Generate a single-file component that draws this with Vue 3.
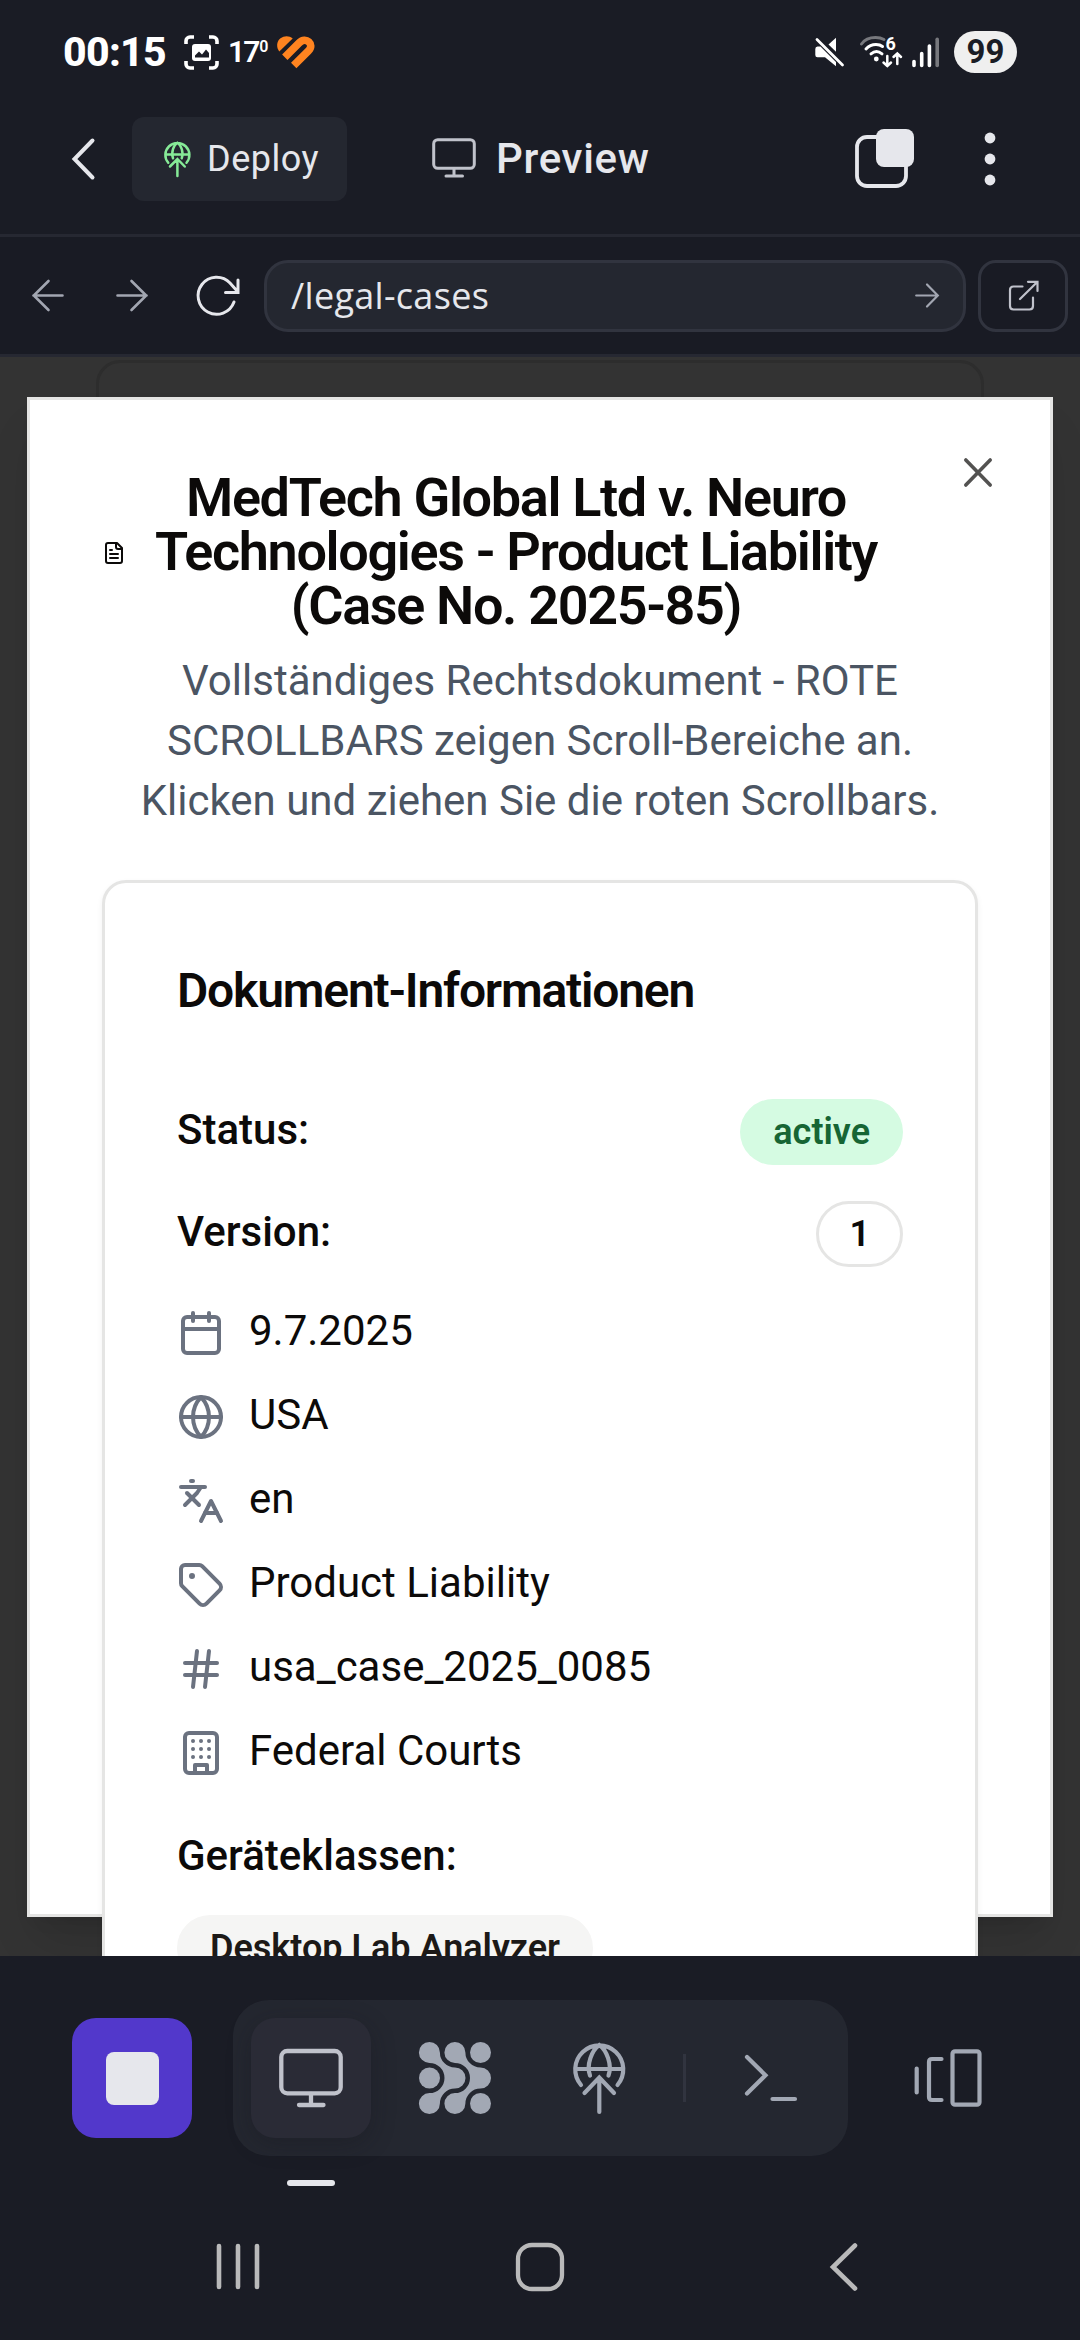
<script setup>
const metaRows = [
  { icon: 'calendar', text: '9.7.2025' },
  { icon: 'globe', text: 'USA' },
  { icon: 'languages', text: 'en' },
  { icon: 'tag', text: 'Product Liability' },
  { icon: 'hash', text: 'usa_case_2025_0085' },
  { icon: 'building', text: 'Federal Courts' },
]

const icons = {
  calendar: ['M8 2v4', 'M16 2v4', 'M5 4h14a2 2 0 0 1 2 2v14a2 2 0 0 1-2 2H5a2 2 0 0 1-2-2V6a2 2 0 0 1 2-2Z', 'M3 10h18'],
  globe: ['M12 2a10 10 0 1 0 0 20 10 10 0 1 0 0-20', 'M12 2a14.5 14.5 0 0 0 0 20 14.5 14.5 0 0 0 0-20', 'M2 12h20'],
  languages: ['m5 8 6 6', 'm4 14 6-6 2-3', 'M2 5h12', 'M7 2h1', 'm22 22-5-10-5 10', 'M14 18h6'],
  tag: [
    'M12.586 2.586A2 2 0 0 0 11.172 2H4a2 2 0 0 0-2 2v7.172a2 2 0 0 0 .586 1.414l8.704 8.704a2.426 2.426 0 0 0 3.42 0l6.58-6.58a2.426 2.426 0 0 0 0-3.42z',
    'M7.5 7a.5.5 0 1 0 0 1 .5.5 0 1 0 0-1',
  ],
  hash: ['M4 9h16', 'M4 15h16', 'M10 3 8 21', 'M16 3l-2 18'],
  building: [
    'M6 2h12a2 2 0 0 1 2 2v16a2 2 0 0 1-2 2H6a2 2 0 0 1-2-2V4a2 2 0 0 1 2-2Z',
    'M9 22v-4h6v4',
    'M8 6h.01M12 6h.01M16 6h.01M8 10h.01M12 10h.01M16 10h.01M8 14h.01M12 14h.01M16 14h.01',
  ],
}
</script>

<template>
  <div class="screen">
    <div class="status-bar">
      <span class="clock">00:15</span>
      <svg class="scan" width="35" height="35" viewBox="0 0 35 35" fill="none" stroke="#fff" stroke-width="3.6">
        <path d="M2 9V6a4 4 0 0 1 4-4h4M25 2h4a4 4 0 0 1 4 4v3M33 26v3a4 4 0 0 1-4 4h-4M10 33H6a4 4 0 0 1-4-4v-3" />
        <rect x="8" y="9" width="19" height="17" rx="3" fill="#fff" stroke="none" />
        <path d="M11 22.5v-2l4-4 3 3 4-5 3 3.500v4.500z" fill="#1a1c25" stroke="none" />
      </svg>
      <span class="temp">17<sup>0</sup></span>
      <svg class="heart" width="38" height="33" viewBox="0 0 38 33" fill="none">
        <path d="M2.300 15.500C-1 11.500-.5 5.500 3.500 2.300 7.500-.7 12.500-.3 15.700 2.600Z" fill="#ff8420" />
        <path d="M7.800 21.200 22 7C29-.2 38 8.500 31.500 14.700L16.700 29.500" stroke="#ff8420" stroke-width="7.600" />
      </svg>
      <div class="status-right">
        <svg class="mute" width="30" height="30" viewBox="0 0 30 30" fill="#fff">
          <path d="M13.500 7.500 21 .8V14.800Z" />
          <path d="M2.500 9.500H5.500L21 25V29.300L10 20.300H2.500Q.3 20.300.3 18V12Q.3 9.500 2.500 9.500Z" />
          <path d="M2 2.500 27.500 28" stroke="#fff" stroke-width="2.800" stroke-linecap="round" />
        </svg>
        <svg class="wifi" width="43" height="34" viewBox="0 0 43 34" fill="none" stroke-width="3" stroke-linecap="round">
          <path d="M1.500 9Q6 2.500 15.500 2.500 20.500 2.500 24 4.500" stroke="#77787d" />
          <path d="M6 14Q10 9.500 16 9.500 20 9.500 22.500 11.500M11 18.800Q16.500 14.300 22 18.800" stroke="#fff" />
          <circle cx="16.300" cy="24" r="2.400" fill="#fff" />
          <path d="M27.300 21V31M23.500 27.500 27.300 31 31 27.500M37.300 29V18.500M33.500 22 37.300 18.500 41 22" stroke="#fff" stroke-width="2.500" />
          <text x="25.500" y="14.500" class="wifi-gen">6</text>
        </svg>
        <svg class="signal" width="28" height="31" viewBox="0 0 28 31" fill="none" stroke-width="3.600" stroke-linecap="round">
          <path d="M2 24.500V28.500M9.700 16.500V28.500M17.400 9V28.500" stroke="#fff" />
          <path d="M25.200 2.200V28.500" stroke="#77787d" />
        </svg>
        <span class="battery">99</span>
      </div>
    </div>

    <header class="header">
      <svg class="back" width="24" height="42" viewBox="0 0 24 42" fill="none" stroke="#e6e7ec" stroke-width="4" stroke-linecap="round"><path d="M20.500 2.500 2.500 21 20.500 39.500" /></svg>
      <button class="deploy">
        <svg width="27" height="36" viewBox="0 0 53 72" fill="none" stroke="#86ea97" stroke-width="5" stroke-linecap="round">
          <path d="M8 43.500A24 24 0 1 1 44.500 43.500M3 27H49.500M17.500 34.500C13 23 19 8 26.300 3.500 33.500 8 39.500 23 35 34.500M26.300 70V36M11.500 51 26.300 36 41 51" />
        </svg>
        <span>Deploy</span>
      </button>
      <svg class="monitor" width="44" height="41" viewBox="0 0 44 41" fill="none" stroke="#c0c2cb" stroke-width="3" stroke-linecap="round">
        <rect x="1.700" y="1.700" width="40.600" height="28.600" rx="4" /><path d="M22 30.500V37M14 38H30.500" />
      </svg>
      <span class="preview">Preview</span>
      <svg class="copy" width="59" height="60" viewBox="0 0 59 60" fill="none">
        <rect x="2" y="8" width="49" height="49" rx="10" stroke="#e6e7ec" stroke-width="3.800" />
        <rect x="21" y="0" width="38" height="38" rx="8" fill="#e6e7ec" />
      </svg>
      <svg class="dots" width="12" height="54" viewBox="0 0 12 54" fill="#e6e7ec"><circle cx="6" cy="6" r="5.400" /><circle cx="6" cy="27" r="5.400" /><circle cx="6" cy="48" r="5.400" /></svg>
    </header>

    <nav class="address-bar">
      <svg class="nav-back" width="32" height="33" viewBox="0 0 32 33" fill="none" stroke="#a2a6b1" stroke-width="2.600" stroke-linecap="round"><path d="M30.500 16.500H1.500M16.500 2 1.800 16.500 16.500 31" /></svg>
      <svg class="nav-forward" width="32" height="33" viewBox="0 0 32 33" fill="none" stroke="#a2a6b1" stroke-width="2.600" stroke-linecap="round"><path d="M1.500 16.500H30.500M15.500 2 30.200 16.500 15.500 31" /></svg>
      <svg class="reload" width="44" height="40" viewBox="0 0 44 40" fill="none" stroke="#e6e7ec" stroke-width="3" stroke-linecap="round">
        <path d="M38 26A18.500 18.500 0 1 1 34 7L42 16M42 4V16.500H29.500" />
      </svg>
      <div class="url">
        <span>/legal-cases</span>
        <svg width="24" height="25" viewBox="0 0 24 25" fill="none" stroke="#a2a6b1" stroke-width="2.200" stroke-linecap="round"><path d="M1.200 12.500H22.500M12 1.500 22.800 12.500 12 23.500" /></svg>
      </div>
      <div class="external">
        <svg width="31" height="31" viewBox="0 0 31 31" fill="none" stroke="#c0c2cb" stroke-width="2.200" stroke-linecap="round"><path d="M14.500 6.500H5.500Q2 6.500 2 10V26Q2 29.500 5.500 29.500H21.500Q25 29.500 25 26V17.500M20 1.800H29.500V11M29 2.200 12 19" /></svg>
      </div>
    </nav>

    <main class="viewport">
      <div class="page-card"></div>
      <section class="modal">
        <svg class="close" width="28" height="29" viewBox="0 0 28 29" fill="none" stroke="#535251" stroke-width="3.600" stroke-linecap="round"><path d="M1.800 2 26.200 27M26.200 2 1.800 27" /></svg>
        <div class="modal-title">
          <svg width="24" height="24" viewBox="0 0 24 24" fill="none" stroke="#0c0a09" stroke-width="2" stroke-linecap="round" stroke-linejoin="round">
            <path d="M15 2H6a2 2 0 0 0-2 2v16a2 2 0 0 0 2 2h12a2 2 0 0 0 2-2V7Z" /><path d="M14 2v4a2 2 0 0 0 2 2h4M10 9H8M16 13H8M16 17H8" />
          </svg>
          <h2>MedTech Global Ltd v. Neuro<br />Technologies - Product Liability<br />(Case No. 2025-85)</h2>
        </div>
        <p class="description">Vollständiges Rechtsdokument - ROTE<br />SCROLLBARS zeigen Scroll-Bereiche an.<br />Klicken und ziehen Sie die roten Scrollbars.</p>
        <div class="card">
          <h3>Dokument-Informationen</h3>
          <div class="field"><span class="label">Status:</span><span class="badge active">active</span></div>
          <div class="field"><span class="label">Version:</span><span class="badge outline">1</span></div>
          <ul class="meta">
            <li v-for="row in metaRows" :key="row.icon">
              <svg width="48" height="48" viewBox="0 0 24 24" fill="none" stroke="#6b7280" stroke-width="2" stroke-linecap="round" stroke-linejoin="round">
                <path v-for="d in icons[row.icon]" :key="d" :d="d" />
              </svg>
              <span>{{ row.text }}</span>
            </li>
          </ul>
          <div class="label devices">Geräteklassen:</div>
          <span class="badge secondary">Desktop Lab Analyzer</span>
        </div>
      </section>
    </main>

    <footer class="toolbar">
      <div class="stop"><i></i></div>
      <div class="tools">
        <div class="tool selected">
          <svg width="64" height="60" viewBox="0 0 64 60" fill="none" stroke="#c0c2cb" stroke-width="4.300" stroke-linecap="round"><rect x="2.300" y="3" width="59.400" height="42.300" rx="6" /><path d="M32 46V56M20 57H44.500" /></svg>
          <i class="indicator"></i>
        </div>
        <div class="tool">
          <svg width="72" height="72" viewBox="0 0 72 72" fill="#a2a8b4">
            <path d="M20.900 10.400A15.100 15.100 0 0 0 36 25.500A10.500 10.500 0 0 1 36 46.500A15.100 15.100 0 0 0 20.900 61.600A10.500 10.500 0 1 1 10.400 51.100A15.100 15.100 0 0 0 10.400 20.900A10.500 10.500 0 1 1 20.900 10.400Z" />
            <path transform="translate(25.500 0)" d="M20.900 10.400A15.100 15.100 0 0 0 36 25.500A10.500 10.500 0 0 1 36 46.500A15.100 15.100 0 0 0 20.900 61.600A10.500 10.500 0 1 1 10.400 51.100A15.100 15.100 0 0 0 10.400 20.900A10.500 10.500 0 1 1 20.900 10.400Z" />
            <circle cx="10.500" cy="36" r="10.500" /><circle cx="61.500" cy="10.500" r="10.500" /><circle cx="61.500" cy="61.500" r="10.500" />
          </svg>
        </div>
        <div class="tool">
          <svg width="53" height="72" viewBox="0 0 53 72" fill="none" stroke="#a2a8b4" stroke-width="4.200" stroke-linecap="round">
            <path d="M8 43A24 24 0 1 1 44.500 43M3 27H49.500M17 33.500C13 23 19 8 26.300 3 33.500 8 39.500 23 35.500 33.500M26.300 70V36M11.500 51 26.300 35.500 41 51" />
          </svg>
        </div>
        <i class="divider"></i>
        <div class="tool">
          <svg width="53" height="48" viewBox="0 0 53 48" fill="none" stroke="#a2a8b4" stroke-width="4.200" stroke-linecap="round"><path d="M3 3 21.500 21.300 3 39.500M28.500 45H51" /></svg>
        </div>
      </div>
      <svg class="devices-icon" width="68" height="58" viewBox="0 0 68 58" fill="none" stroke="#a2a8b4" stroke-width="4.200" stroke-linecap="round"><path d="M2.700 19.500V43.500M27.500 10H18Q15 10 15 13V48Q15 51 18 51H27.500" /><rect x="38.500" y="2.300" width="27" height="53.400" rx="2.500" /></svg>
    </footer>

    <div class="system-nav">
      <svg width="46" height="50" viewBox="0 0 46 50" fill="none" stroke="#b9b9ba" stroke-width="4.600" stroke-linecap="round"><path d="M4 4V45M23 4V45M42 4V45" /></svg>
      <svg class="home" width="50" height="50" viewBox="0 0 50 50" fill="none" stroke="#b9b9ba" stroke-width="4.300"><rect x="3" y="3" width="44" height="44" rx="14" /></svg>
      <svg class="nav-prev" width="30" height="50" viewBox="0 0 30 50" fill="none" stroke="#b9b9ba" stroke-width="4.600" stroke-linecap="round"><path d="M26 3.500 4 25 26 46.500" /></svg>
    </div>
  </div>
</template>

<style>
body { background: #1a1c25; }
</style>

<style scoped>
* { box-sizing: border-box; }
.screen { width: 1080px; height: 2340px; overflow: hidden; display: flex; flex-direction: column; background: #1a1c25; font-family: Roboto, sans-serif; color: #0c0a09; }
svg { display: block; flex: none; overflow: visible; }

.status-bar { height: 104px; display: flex; align-items: center; padding: 0 63px; color: #fff; }
.clock { font-size: 41px; font-weight: 800; width: 121px; letter-spacing: -.7px; }
.temp { margin-left: 9px; font-size: 30px; font-weight: 600; width: 49px; letter-spacing: -2px; line-height: 40px; display: flex; }
.temp sup { font-size: 16px; font-weight: 600; line-height: 30px; margin-left: 1px; }
.status-right { margin-left: auto; display: flex; align-items: center; }
.wifi { margin-left: 15px; }
.wifi-gen { font: 700 18px Roboto, sans-serif; fill: #fff; stroke: none; }
.signal { margin-left: 9px; }
.battery { margin-left: 14px; width: 63px; height: 42px; border-radius: 21px; background: #efefef; color: #1a1c25; font-size: 33px; font-weight: 700; line-height: 42px; text-align: center; }

.header { height: 133px; padding: 12px 84px 33px 72px; border-bottom: 3px solid #262832; display: flex; align-items: center; }
.deploy { margin: 0 0 0 36px; border: 0; padding: 0 0 0 32px; width: 215px; height: 84px; border-radius: 12px; background: #242730; color: #e6e7ec; display: flex; align-items: center; gap: 16px; font: 400 36px Roboto, sans-serif; letter-spacing: .5px; }
.monitor { margin-left: 85px; }
.preview { margin-left: 20px; font-size: 42px; font-weight: 500; letter-spacing: .7px; color: #e6e7ec; }
.copy { margin-left: auto; }
.dots { margin-left: 70px; }

.address-bar { height: 120px; display: flex; align-items: center; padding: 0 12px 0 32px; border-bottom: 3px solid #262832; background: #191b24; }
.nav-forward { margin-left: 52px; }
.reload { margin-left: 48px; }
.url { margin-left: 24px; width: 702px; height: 72px; border: 3px solid #31343f; border-radius: 24px; background: #242730; padding: 0 24px; display: flex; align-items: center; justify-content: space-between; color: #e6e7ec; font: 400 36px "Open Sans", sans-serif; letter-spacing: .3px; }
.external { margin-left: 12px; width: 90px; height: 72px; border: 3px solid #31343f; border-radius: 18px; display: flex; align-items: center; justify-content: center; }

.viewport { position: relative; height: 1599px; flex: none; overflow: hidden; background: #333; padding: 40px 27px 0; }
.page-card { position: absolute; left: 96px; top: 3px; width: 888px; height: 400px; border: 3px solid #2d2d2d; border-radius: 24px; }
.modal { position: relative; height: 1520px; background: #fff; border: 3px solid #e5e5e4; padding: 72px; box-shadow: 0 30px 45px -9px rgba(0, 0, 0, .12), 0 12px 18px -12px rgba(0, 0, 0, .12); }
.close { position: absolute; right: 58px; top: 58px; }
.modal-title { display: flex; align-items: center; gap: 24px; padding-right: 96px; }
h2 { flex: 1; margin: -1px 0 1px; font-size: 54px; line-height: 54px; font-weight: 600; letter-spacing: -1.35px; text-align: center; white-space: nowrap; }
.description { margin: 17px 0 0; font-size: 42px; line-height: 60px; color: #4b5563; text-align: center; white-space: nowrap; }
.card { margin-top: 49px; height: 1200px; background: #fff; border: 3px solid #e5e5e4; border-radius: 24px; padding: 72px; box-shadow: 0 3px 6px rgba(0, 0, 0, .06); }
h3 { margin: 12px 0 84px; font-size: 48px; line-height: 48px; font-weight: 600; letter-spacing: -1.2px; }
.field { height: 66px; margin-bottom: 36px; display: flex; align-items: center; justify-content: space-between; }
.label { font-size: 42px; line-height: 60px; font-weight: 500; }
.field .label { margin-bottom: 4px; }
.badge { display: inline-block; height: 66px; border: 3px solid transparent; border-radius: 33px; padding: 0 30px; font-size: 36px; line-height: 60px; font-weight: 600; }
.active { background: #d5fbe2; color: #166534; }
.outline { border-color: #e5e5e4; }
.secondary { background: #f5f5f4; color: #1c1917; }
.meta { list-style: none; margin: -2px 0 45px; padding: 0; display: flex; flex-direction: column; gap: 24px; font-size: 42px; line-height: 60px; }
.meta li { display: flex; gap: 24px; }
.meta svg { margin-top: 8px; }
.devices { margin-bottom: 29px; }

.toolbar { height: 200px; padding: 44px 98px 0 72px; display: flex; align-items: center; }
.stop { width: 120px; height: 120px; border-radius: 24px; background: #5238cb; display: flex; align-items: center; justify-content: center; }
.stop i { width: 53px; height: 53px; border-radius: 8px; background: #e6e7ec; }
.tools { margin-left: 41px; width: 615px; height: 156px; border-radius: 36px; background: #242730; padding: 0 18px; display: flex; align-items: center; gap: 24px; }
.tool { position: relative; width: 120px; height: 120px; border-radius: 24px; display: flex; align-items: center; justify-content: center; }
.selected { background: #2a2b36; box-shadow: 0 6px 24px rgba(20, 20, 28, .3); }
.indicator { position: absolute; left: 36px; top: 162px; width: 48px; height: 6px; border-radius: 3px; background: #e6e7ec; }
.divider { width: 3px; height: 48px; background: #31343f; }
.devices-icon { margin-left: auto; }

.system-nav { height: 184px; padding: 38px 0 0 215px; display: flex; align-items: center; }
.home { margin-left: 254px; }
.nav-prev { margin-left: 264px; }
</style>
